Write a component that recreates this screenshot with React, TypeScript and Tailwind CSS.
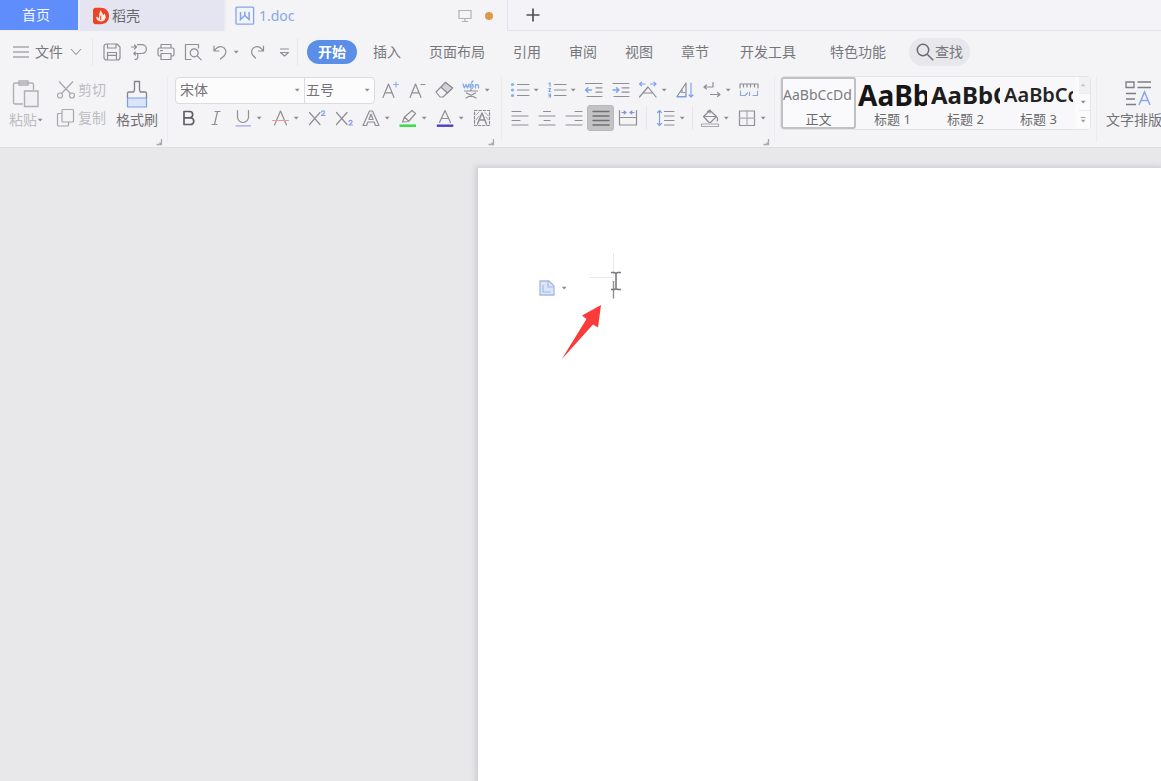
import type { ReactNode } from "react";

type DrawingProps = { children: ReactNode; className?: string };

function Icon({ children, className = "h-5 w-5" }: DrawingProps) {
  return (
    <svg
      viewBox="0 0 20 20"
      className={className}
      fill="none"
      stroke="currentColor"
      strokeWidth="1.2"
      strokeLinecap="round"
      strokeLinejoin="round"
      aria-hidden="true"
    >
      {children}
    </svg>
  );
}

function Caret() {
  return (
    <svg viewBox="0 0 10 6" className="h-1.5 w-2.5 shrink-0" fill="#8c8c91" aria-hidden="true">
      <path d="M.8 1.800h4.800L3.200 4.500z" />
    </svg>
  );
}

function Tool({ label, caret, active, children }: { label: string; caret?: boolean; active?: boolean; children: ReactNode }) {
  return (
    <button type="button" aria-label={label} className="flex h-7 shrink-0 items-center text-[#8e8e93]">
      <span
        className={
          active
            ? "flex h-[26px] w-[27px] items-center justify-center rounded-[3px] border border-[#b9b9bb] bg-[#c3c3c5] text-[#6f6f72]"
            : "flex h-[26px] w-[27px] items-center justify-center"
        }
      >
        {children}
      </span>
      {caret && <Caret />}
    </button>
  );
}

function Launcher({ label }: { label: string }) {
  return (
    <button type="button" aria-label={label} className="h-2 w-2 self-end text-[#a8a8ad]">
      <svg viewBox="0 0 8 8" className="h-2 w-2" fill="none" stroke="currentColor" strokeWidth="1.3" aria-hidden="true">
        <path d="M6.500 1v5.500H1.500M4.500 4.500l2 2" />
      </svg>
    </button>
  );
}

function Rule() {
  return <span className="h-[66px] w-px shrink-0 bg-[#ececf0]" />;
}

function TabBar() {
  return (
    <div className="flex h-[31px] shrink-0 bg-[#ececf2] text-sm">
      <button type="button" className="h-[30px] w-[78px] shrink-0 bg-[#5f8dfc] pr-1.5 text-[#f4f7ff]">
        首页
      </button>
      <button type="button" className="ml-0.5 flex w-36 shrink-0 items-center bg-[#e4e5f0] pl-[13px] text-[#68686d]">
        <svg viewBox="0 0 16 18" className="h-[18px] w-4" aria-hidden="true">
          <path d="M2.5.8h5.2C12.6.8 16 4 16 9s-3.400 8.200-8.300 8.200H2.500C1 17.200 0 16.200 0 14.700V3.300C0 1.800 1 .8 2.500.8z" fill="#ea4526" />
          <path d="M7.800 3.200c.4 2 2.200 3 2.200 5 .7-.4 1-1 1.100-1.700 1 1 1.600 2.200 1.600 3.500 0 2.700-2 4.400-4.600 4.400-2.900 0-4.800-1.800-5-4.700 1.300.1 2.300.8 3 2C6 8.700 6 5.500 7.800 3.200z" fill="#fff1e8" />
          <path d="M7.700 8.500v4.500" stroke="#ea4526" strokeWidth="1" />
        </svg>
        <span className="ml-[3px]">稻壳</span>
      </button>
      <div className="ml-0.5 flex w-[281px] shrink-0 items-center bg-[#f4f4f7] pl-[9px]">
        <svg viewBox="0 0 20 20" className="h-5 w-5" fill="none" stroke="#82a6ea" strokeWidth="1.300" aria-hidden="true">
          <rect x="1" y="1.200" width="17.600" height="17" rx="1" />
          <path d="M5.500 6v7.500l4.300-4 4.300 4V6M9.800 5.800v3.700" strokeWidth="1.500" />
        </svg>
        <button type="button" className="ml-1 grow text-left text-sm text-[#88a7e6]">
          1.doc
        </button>
        <svg viewBox="0 0 14 14" className="h-3.5 w-3.5" fill="none" stroke="#b0b0b6" strokeWidth="1.200" aria-hidden="true">
          <path d="M1 1.500h12v8H1zM7 9.500v3M3.800 12.500h6.400" />
        </svg>
        <span className="ml-[13px] mr-3.5 h-2 w-2 rounded-full bg-[#e0964c]" />
      </div>
      <div className="flex grow items-center border-b border-l border-[#e2e3ee] bg-[#f4f4f8] pl-[18px]">
        <button type="button" aria-label="新建" className="text-[#505055]">
          <svg viewBox="0 0 14 14" className="h-3.5 w-3.5" stroke="currentColor" strokeWidth="1.700" aria-hidden="true">
            <path d="M7 .5v13M.5 7h13" />
          </svg>
        </button>
      </div>
    </div>
  );
}

function MenuRow() {
  return (
    <div className="flex h-[42px] shrink-0 items-center text-sm text-[#77777b]">
      <button type="button" className="flex w-[92px] shrink-0 items-center pl-3">
        <svg viewBox="0 0 18 14" className="h-3.5 w-[18px]" stroke="#828287" strokeWidth="1.200" aria-hidden="true">
          <path d="M1 2h16M1 7h16M1 12h16" />
        </svg>
        <span className="ml-[5px]">文件</span>
        <svg viewBox="0 0 12 8" className="ml-[7px] h-2 w-3" fill="none" stroke="#99999e" strokeWidth="1.100" aria-hidden="true">
          <path d="M1 1l5 5.500L11 1" />
        </svg>
      </button>
      <span className="mr-[5px] h-7 w-px shrink-0 bg-[#e8e8ec]" />
      <Tool label="保存">
        <Icon>
          <path d="M2 4.500C2 3 3 2 4.500 2H15l3 3v10.500c0 1.500-1 2.500-2.500 2.500h-11C3 18 2 17 2 15.500zM5.500 18v-7.500h9V18M5.500 2v4h8.500V2M6 13.300h8" />
        </Icon>
      </Tool>
      <Tool label="输出为PDF">
        <Icon>
          <path d="M2.500 5h5M5.500 3l2 2-2 2M8.500 2.700h4.500a4.400 4.400 0 0 1 0 8.800H5M6.500 9.800L4.800 11.500l1.700 1.700M8.800 11.500V15c0 1.700-1 2.500-2.800 2.500" />
        </Icon>
      </Tool>
      <Tool label="打印">
        <Icon>
          <path d="M5 6V2.500h10V6M5 14H3.500C2.500 14 2 13.500 2 12.500v-5C2 6.500 2.500 6 3.500 6h13c1 0 1.500.5 1.500 1.500v5c0 1-.5 1.500-1.500 1.500H15M5 11.500h10v6H5zM4.500 8.700h2" />
        </Icon>
      </Tool>
      <Tool label="打印预览">
        <Icon>
          <path d="M7.500 17.500H2.500V2.500h13V6" />
          <circle cx="11.200" cy="10.800" r="4" />
          <path d="M14.200 13.800l4 4M5 17.500h3" />
        </Icon>
      </Tool>
      <Tool label="撤销" caret>
        <Icon>
          <path d="M4 4v5h5M4.500 8.700c2-3 5-4.700 8-3.700 3.500 1.300 4.500 5.500 2 8.500L10.500 17" />
        </Icon>
      </Tool>
      <Tool label="恢复">
        <Icon>
          <path d="M16.500 4v5h-5M16 8.700c-2-3-5-4.700-8-3.700-3.500 1.300-4.500 5.500-2 8.500L8.500 16" />
        </Icon>
      </Tool>
      <Tool label="自定义快速访问工具栏">
        <Icon>
          <path d="M6.500 7h8M6.500 10.500h8l-4 3.500z" />
        </Icon>
      </Tool>
      <span className="mr-[9px] h-7 w-px shrink-0 bg-[#e8e8ec]" />
      <nav className="flex shrink-0 items-center">
        <button type="button" className="mr-0.5 h-6 w-[50px] rounded-full bg-[#5b8ee6] font-bold text-white">
          开始
        </button>
        {["插入", "页面布局", "引用", "审阅", "视图", "章节"].map((name) => (
          <button type="button" key={name} className="px-3.5">
            {name}
          </button>
        ))}
        {["开发工具", "特色功能"].map((name) => (
          <button type="button" key={name} className="px-[17px]">
            {name}
          </button>
        ))}
      </nav>
      <button type="button" className="ml-1.5 flex h-7 w-[61px] shrink-0 items-center justify-center gap-px rounded-full bg-[#e7e7ec]">
        <svg viewBox="0 0 18 18" className="h-[18px] w-[18px]" fill="none" stroke="#6b6b70" strokeWidth="1.500" aria-hidden="true">
          <circle cx="7" cy="7" r="5.700" />
          <path d="M11.200 11.200l6 6" />
        </svg>
        查找
      </button>
    </div>
  );
}

function ClipboardGroup() {
  return (
    <section aria-label="剪贴板" className="flex w-[167px] shrink-0 flex-col">
      <div className="flex h-14 pl-[9px] text-sm leading-5 text-[#bdbdc1]">
        <button type="button" className="flex w-[38px] shrink-0 flex-col items-start whitespace-nowrap">
          <svg viewBox="0 0 28 28" className="ml-[3px] mt-1 h-7 w-7 shrink-0" fill="none" stroke="#aeaeb3" strokeWidth="1.400" aria-hidden="true">
            <path d="M11 24H3c-1 0-1.500-.5-1.500-1.500V4.500C1.500 3.500 2 3 3 3h17c1 0 1.500.5 1.500 1.500V10M7 1h9v4H7z" />
            <path d="M12.500 11h13.500v15.500H12.500z" fill="#f1f1f4" />
          </svg>
          <span className="mt-0.5 flex items-center">
            粘贴
            <Caret />
          </span>
        </button>
        <div className="ml-[9px] flex w-[50px] shrink-0 flex-col">
          <button type="button" className="flex h-[30px] items-center gap-0.5">
            <svg viewBox="0 0 20 20" className="h-5 w-5" fill="none" stroke="#a6a6ab" strokeWidth="1.200" aria-hidden="true">
              <circle cx="4" cy="15.500" r="2.500" />
              <circle cx="16" cy="15.500" r="2.500" />
              <path d="M3 1.500l11.500 12M17 1.500L5.500 13.500" />
            </svg>
            剪切
          </button>
          <button type="button" className="flex h-[30px] items-center gap-0.5">
            <svg viewBox="0 0 20 20" className="h-5 w-5" fill="none" stroke="#a6a6ab" strokeWidth="1.200" aria-hidden="true">
              <path d="M7 1.500h9.500c.7 0 1 .3 1 1V13c0 .7-.3 1-1 1H7c-.7 0-1-.3-1-1V2.500c0-.7.3-1 1-1zM6 5.500H2.500c-.7 0-1 .3-1 1V17c0 .7.3 1 1 1h9c.7 0 1-.3 1-1v-3" />
            </svg>
            复制
          </button>
        </div>
        <button type="button" className="ml-2.5 flex w-[42px] shrink-0 flex-col items-center whitespace-nowrap text-[#707075]">
          <svg viewBox="0 0 22 28" className="mt-1 h-7 w-[22px]" fill="none" aria-hidden="true">
            <path d="M1.500 18h19v9h-19z" fill="#d9e5fa" stroke="#7c9fe0" strokeWidth="1.200" />
            <path d="M1.500 18v-4.500c0-1 .5-1.500 1.500-1.500h4.500l1-2V1.500h5V10l1 2H19c1 0 1.500.5 1.500 1.500V18" stroke="#828287" strokeWidth="1.300" />
          </svg>
          <span className="mt-0.5">格式刷</span>
        </button>
      </div>
      <div className="mt-1.5 flex justify-end pr-1">
        <Launcher label="剪贴板选项" />
      </div>
    </section>
  );
}

function FontGroup() {
  return (
    <section aria-label="字体" className="ml-[7px] flex w-[320px] shrink-0 flex-col">
      <div className="flex h-7 items-center">
        <div className="mr-px flex h-[27px] w-[200px] shrink-0 rounded border border-[#dcdce0] bg-[#fcfcfd] text-sm text-[#747478]">
          <span className="flex grow items-center border-r border-[#dcdce0]">
            <select aria-label="字体名称" defaultValue="宋体" className="w-full appearance-none bg-transparent pl-1 outline-none">
              <option>宋体</option>
              <option>黑体</option>
            </select>
            <Caret />
          </span>
          <span className="flex w-[69px] shrink-0 items-center">
            <select aria-label="字号" defaultValue="五号" className="w-full appearance-none bg-transparent pl-px outline-none">
              <option>五号</option>
              <option>四号</option>
            </select>
            <Caret />
          </span>
        </div>
        <Tool label="增大字号">
          <Icon>
            <path d="M3 17.500L8.500 4 14 17.500M5 12.800h7" />
            <path d="M13.500 4.500h5M16 2v5" stroke="#8fb0ea" />
          </Icon>
        </Tool>
        <Tool label="减小字号">
          <Icon>
            <path d="M3 17.500L8.500 4 14 17.500M5 12.800h7" />
            <path d="M14 4.500h4" />
          </Icon>
        </Tool>
        <Tool label="清除格式">
          <Icon>
            <path d="M2 12L11.500 2.500l7 5.500-9.500 9H6z" />
            <path d="M7 7.200l6.500 5.800L18.500 8l-7-5.500z" fill="#d3d3d6" />
          </Icon>
        </Tool>
        <Tool label="拼音指南" caret>
          <Icon>
            <path d="M2 4l1.300 4L5 4.500 6.500 8 8 4M8.800 6.200h3.500c0-3-3.400-2.800-3.400 0 0 2.300 2 2.200 3.200 1.500M14.500 8V4.500M14.500 5.500c1-1.400 3-1.300 3 .5v2M10.500 2.500l1.500-1.500" stroke="#7fa6ea" />
            <path d="M3.500 11h13M10 9.500V11M5 18l9.500-5M15 18l-9.500-5" />
          </Icon>
        </Tool>
      </div>
      <div className="flex h-7 items-center">
        <Tool label="加粗">
          <Icon>
            <path d="M5 3.500h5.500a3.200 3.200 0 0 1 0 6.400H5zM5 9.900h6.500a3.300 3.300 0 0 1 0 6.600H5z" stroke="#5f5f63" strokeWidth="1.700" />
          </Icon>
        </Tool>
        <Tool label="倾斜">
          <Icon>
            <path d="M9 3.500h5M6 16.500h5M11.500 3.500l-3 13" />
          </Icon>
        </Tool>
        <Tool label="下划线" caret>
          <Icon>
            <path d="M4.500 2.500V9a5.500 5.500 0 0 0 11 0V2.500" />
            <path d="M3 17.800h14.500" stroke="#98a6e6" />
          </Icon>
        </Tool>
        <Tool label="删除线" caret>
          <Icon>
            <path d="M4.500 17L10.500 3l6 14" />
            <path d="M2.500 12.500h16" stroke="#e79b9b" />
          </Icon>
        </Tool>
        <Tool label="上标">
          <Icon>
            <path d="M2.500 4.500L13 16.500M13 4.500L2.500 16.500" />
            <path d="M14.500 4c.3-1.800 3.500-1.500 3 .5-.3 1-1.600 1.800-3 3h3.500" stroke="#7fa6e8" />
          </Icon>
        </Tool>
        <Tool label="下标">
          <Icon>
            <path d="M2.500 4.500L13 16.500M13 4.500L2.500 16.500" />
            <path d="M15 13.500c.3-1.800 3.500-1.500 3 .5-.3 1-1.600 1.800-3 3h3.500" stroke="#8c9be0" />
          </Icon>
        </Tool>
        <Tool label="文字效果" caret>
          <Icon>
            <path d="M2 17.500L8.500 3h3L18 17.500h-3.500L13 14H7l-1.500 3.500zM10 6l-2 5.500h4z" />
          </Icon>
        </Tool>
        <Tool label="突出显示" caret>
          <Icon>
            <path d="M4.500 14l2-5 7.500-6.500 3.500 3-7 8zM6.500 9l4 4" />
            <path d="M1.500 17.700h16.500" stroke="#3fdc4b" strokeWidth="2.600" strokeLinecap="butt" />
          </Icon>
        </Tool>
        <Tool label="字体颜色" caret>
          <Icon>
            <path d="M4.500 14.500L10 2.500l5.500 12M6.500 10.500h7" />
            <path d="M1.800 17.700h16.500" stroke="#4a3fc9" strokeWidth="2.400" strokeLinecap="butt" />
          </Icon>
        </Tool>
        <Tool label="字符底纹">
          <Icon>
            <path d="M2.500 2.500h15v15h-15z" strokeDasharray="2.500 1.800" />
            <path d="M5.500 16L10 5l4.500 11M7.300 12h5.400" strokeWidth="1.500" />
            <path d="M4 7l3-3M4 12l3-4M13 4.500l3.500 3.500M14 9l2.500 3" strokeWidth=".8" />
          </Icon>
        </Tool>
      </div>
      <div className="mt-1.5 flex justify-end">
        <Launcher label="字体选项" />
      </div>
    </section>
  );
}

function ParagraphGroup() {
  return (
    <section aria-label="段落" className="ml-1 flex w-[264px] shrink-0 flex-col">
      <div className="flex h-7 items-center">
        <Tool label="项目符号" caret>
          <Icon>
            <path d="M7.500 4.500H19M7.500 10H19M7.500 15.500H19" />
            <path d="M2.500 4.500h.1M2.500 10h.1M2.500 15.500h.1" stroke="#8faeea" strokeWidth="3.200" />
          </Icon>
        </Tool>
        <Tool label="编号" caret>
          <Icon>
            <path d="M7.500 4.500H19M7.500 10H19M7.500 15.500H19" />
            <path d="M2 3.500l1-.6v3.200M1.800 8.500h1.700L2 11.500h1.700M1.800 14h1.700v3H1.800M2 15.500h1.500" stroke="#7fa3ea" />
          </Icon>
        </Tool>
        <Tool label="减少缩进量">
          <Icon>
            <path d="M1.500 3.500H18M12 7.800h6M12 12.200h6M3 16.500h15" />
            <path d="M1.500 10h6M4 7.700L1.500 10 4 12.300" stroke="#7fa3ea" strokeWidth="1.500" />
          </Icon>
        </Tool>
        <Tool label="增加缩进量">
          <Icon>
            <path d="M2 3.500h16M11 7.800h7M11 12.200h7M3 16.500h15" />
            <path d="M2 10h6M5.500 7.700L8 10l-2.500 2.300" stroke="#7fa3ea" strokeWidth="1.500" />
          </Icon>
        </Tool>
        <Tool label="中文版式" caret>
          <Icon>
            <path d="M1.500 17L10 7l8 10M5 13h10" />
            <path d="M1.500 4h5.500M3.500 2.200L1.500 4l2 1.800M12.500 4H18M16 2.200L18 4l-2 1.800" stroke="#7fa3ea" />
          </Icon>
        </Tool>
        <Tool label="排序">
          <Icon>
            <path d="M2 16.500L11 3v13.500zM7 12.500V9.500" />
            <path d="M2 16.800h9M6 12.500h4.500M16 3v14M14 15l2 2 2-2" stroke="#7fa3ea" />
          </Icon>
        </Tool>
        <Tool label="显示段落标记" caret>
          <Icon>
            <path d="M11 2.500V7H2M4.500 5L2 7l2.500 2M8.500 14.500H18M15.500 12.500l2.500 2-2.500 2" />
          </Icon>
        </Tool>
        <Tool label="制表位">
          <Icon>
            <path d="M1 8V4h18v4M4.500 4v3M8 4v3M11.500 4v3M15.500 4v3" />
            <path d="M1.500 11v4.500H6M8.500 13l-2.500 2.500M18.500 11v4.500H14M10.500 12v3.500" stroke="#8ea6dd" />
          </Icon>
        </Tool>
      </div>
      <div className="flex h-7 items-center">
        <Tool label="左对齐">
          <Icon>
            <path d="M2 3.500h9M2 8h16M2 12.500h8M2 17h16" />
          </Icon>
        </Tool>
        <Tool label="居中对齐">
          <Icon>
            <path d="M6.500 3.500h7M2 8h16M7 12.500h6M2 17h16" />
          </Icon>
        </Tool>
        <Tool label="右对齐">
          <Icon>
            <path d="M11 3.500h7M2 8h16M11 12.500h7M2 17h16" />
          </Icon>
        </Tool>
        <Tool label="两端对齐" active>
          <Icon>
            <path d="M2 3.500h16M2 8h16M2 12.500h16M2 17h16" strokeWidth="1.400" />
          </Icon>
        </Tool>
        <Tool label="分散对齐">
          <Icon>
            <path d="M1.500 2.500v14.500h17V2.500M1.500 9.500h17" />
            <path d="M4 4.500h4M6 3l2 1.500L6 6M16 4.500h-4M14 3l-2 1.500L14 6" stroke="#7f97d8" />
          </Icon>
        </Tool>
        <span className="mx-[5px] h-6 w-px shrink-0 bg-[#e6e6ea]" />
        <Tool label="行距" caret>
          <Icon>
            <path d="M8.500 3.500H18M8.500 8H18M8.500 12.500H18M8.500 17H18" />
            <path d="M3.500 2.500v15M1.500 4.500l2-2 2 2M1.500 15.500l2 2 2-2" stroke="#7fa3ea" />
          </Icon>
        </Tool>
        <span className="mx-[3px] h-6 w-px shrink-0 bg-[#e6e6ea]" />
        <Tool label="底纹颜色" caret>
          <Icon>
            <path d="M3.500 8.500L10 2.500l6.500 6-6 6H9zM7.500 3.500L10 2v3M3.500 8.500h13M16.500 8.500c1.500 2 1.500 4 .5 4.500" />
            <path d="M1.500 16h17v2.500h-17z" stroke="#a9a9ae" />
          </Icon>
        </Tool>
        <Tool label="边框" caret>
          <Icon>
            <path d="M2.500 3h15v14.500h-15z" />
            <path d="M10 3v14.500M2.500 10.200h15" stroke="#acacb1" />
          </Icon>
        </Tool>
      </div>
      <div className="mt-1.5 flex justify-end">
        <Launcher label="段落选项" />
      </div>
    </section>
  );
}

function StyleCard({ name, sample, sampleClass, selected }: { name: string; sample: string; sampleClass: string; selected?: boolean }) {
  return (
    <button
      type="button"
      className={
        selected
          ? "flex w-[75px] shrink-0 flex-col items-center rounded-[3px] border-2 border-[#c1c1c4] bg-[#fafafc]"
          : "flex w-[73px] shrink-0 flex-col items-center border-2 border-transparent"
      }
    >
      <span className={`block h-8 w-full overflow-hidden whitespace-nowrap text-left ${sampleClass}`}>{sample}</span>
      <span className="text-[13px] leading-4 text-[#69696d]">{name}</span>
    </button>
  );
}

function StylesGroup() {
  return (
    <section aria-label="样式" className="ml-[5px] flex h-[54px] w-[311px] shrink-0 rounded border border-[#e4e4e8] bg-[#f8f8fa]">
      <StyleCard name="正文" sample="AaBbCcDd" sampleClass="text-sm leading-8 text-[#7b7b7f]" selected />
      <StyleCard name="标题 1" sample="AaBb" sampleClass="text-[28px] leading-8 font-bold text-[#161616]" />
      <StyleCard name="标题 2" sample="AaBbC" sampleClass="text-2xl leading-8 font-bold text-[#1d1d1d]" />
      <StyleCard name="标题 3" sample="AaBbCc" sampleClass="text-xl leading-8 font-semibold text-[#242424]" />
      <div className="flex grow flex-col divide-y divide-[#ececf0] bg-[#fbfbfc] pl-1">
        <button type="button" aria-label="上一行" className="flex grow items-center justify-center bg-[#f1f1f4]">
          <svg viewBox="0 0 10 6" className="h-1.5 w-2.5" fill="#c6c6ca" aria-hidden="true">
            <path d="M.8 4.200h4.800L3.200 1.500z" />
          </svg>
        </button>
        <button type="button" aria-label="下一行" className="flex grow items-center justify-center">
          <Caret />
        </button>
        <button type="button" aria-label="更多样式" className="flex grow items-center justify-center">
          <svg viewBox="0 0 10 8" className="h-2 w-2.5" fill="#a0a0a5" aria-hidden="true">
            <path d="M.8 1h4.800v1H.8zM.8 3.800h4.800L3.200 6.500z" />
          </svg>
        </button>
      </div>
    </section>
  );
}

function Ribbon() {
  return (
    <div className="flex h-[74px] shrink-0 pt-[3px]">
      <ClipboardGroup />
      <Rule />
      <FontGroup />
      <span className="ml-1.5" />
      <Rule />
      <ParagraphGroup />
      <span className="ml-1" />
      <Rule />
      <StylesGroup />
      <span className="ml-[5px]" />
      <Rule />
      <button type="button" className="ml-[9px] flex w-14 shrink-0 flex-col items-center whitespace-nowrap text-sm leading-5 text-[#737377]">
        <svg viewBox="0 0 28 28" className="ml-2 mt-[3px] h-7 w-7" fill="none" stroke="#7d7d82" strokeWidth="1.300" aria-hidden="true">
          <path d="M2 3h8v5.500H2zM13.500 3H27M13.500 8.500H27M2 14.500h10M2 20h9M2 25.500h10" />
          <path d="M15 26l5.500-13L26 26M17 21.500h7" stroke="#86a8ea" strokeWidth="1.500" />
        </svg>
        <span className="mt-[3px]">文字排版</span>
      </button>
    </div>
  );
}

function Page() {
  return (
    <article className="relative ml-[478px] mt-5 grow bg-white pl-[61px] pt-28 shadow-[-1px_0_5px_2px_#cfcfd2]">
      <button type="button" aria-label="页面选项" className="flex items-center gap-1.5">
        <svg viewBox="0 0 16 16" className="h-4 w-4" aria-hidden="true">
          <path d="M1 1h9l5 5v9H1z" fill="#dbe5f7" stroke="#a5b9e2" strokeWidth="1.300" />
          <path d="M9 1v6h6M4 5v7h8" fill="none" stroke="#a5b9e2" strokeWidth="1.200" />
        </svg>
        <Caret />
      </button>
      <svg viewBox="0 0 36 48" className="absolute left-[110px] top-[84px] h-12 w-9" fill="none" aria-hidden="true">
        <path d="M25.500 1v24.500H1" stroke="#e9e9ec" />
        <path d="M25.500 29v17.500" stroke="#8f8f93" strokeWidth="1.400" />
        <path d="M23 20.500h3.500l1.500 1 1.500-1H33M28 21.500v15M23 37.500h3.500l1.500-1 1.500 1H33" stroke="#7a7a7f" strokeWidth="1.600" />
      </svg>
      <svg viewBox="0 0 42 56" className="absolute left-[82px] top-[136px] h-14 w-[42px]" aria-hidden="true">
        <path d="M41 1L22 11.500l4.500 3.500L1.500 55.500 33 20.500l5 3z" fill="#fb3a3a" />
      </svg>
    </article>
  );
}

export default function App() {
  return (
    <div className="flex min-h-screen flex-col overflow-hidden bg-[#e8e7ea] font-['Noto_Sans','Noto_Sans_CJK_SC',sans-serif]">
      <header className="flex flex-col overflow-hidden border-b border-[#dededf] bg-[#f4f4f7]">
        <TabBar />
        <MenuRow />
        <Ribbon />
      </header>
      <main className="flex grow flex-col">
        <Page />
      </main>
    </div>
  );
}
